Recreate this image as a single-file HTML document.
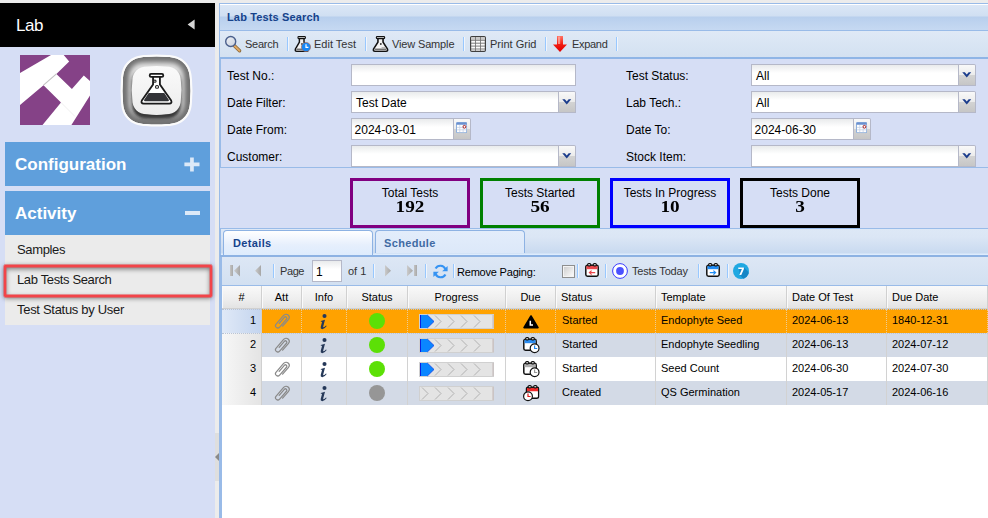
<!DOCTYPE html>
<html>
<head>
<meta charset="utf-8">
<title>Lab Tests Search</title>
<style>
*{box-sizing:border-box;margin:0;padding:0}
html,body{width:988px;height:518px;overflow:hidden}
body{position:relative;background:#ececec;font-family:"Liberation Sans",sans-serif;font-size:12px;color:#000}
.abs{position:absolute}
svg{position:absolute;overflow:visible}
.t{position:absolute;white-space:nowrap;line-height:1}
/* ---------- sidebar ---------- */
#side{position:absolute;left:0;top:3px;width:215px;height:515px;background:#d6def5}
#sidehead{position:absolute;left:0;top:0;width:215px;height:44px;background:#000}
.acc{position:absolute;left:5px;width:205px;height:44px;background:#5f9fdc}
.acc .t{left:10px;color:#fff;font-weight:bold;font-size:17px}
#menu{position:absolute;left:5px;top:232px;width:205px;height:90px;background:#ebebeb}
#menu .t{left:12px;font-size:13px;color:#1a1a1a}
#sel{position:absolute;left:4px;top:261.5px;width:208px;height:32px;border:2px solid #f24449;border-radius:1px;box-shadow:0 0 0 .4px #f24449,inset 0 0 0 .4px #f24449,0 1px 5px rgba(0,0,0,.55),inset 0 2px 5px rgba(0,0,0,.5)}
/* ---------- main ---------- */
#main{position:absolute;left:219px;top:3px;width:769px;height:515px;background:#d6def5;border-left:1px solid #99bbe8;border-top:1px solid #99bbe8}
#phead{position:absolute;left:0;top:0;width:768px;height:26px;border-top:1px solid #fff;background:linear-gradient(#dbe7f6 0,#d0dff2 11px,#b8cfed 12px,#c6d9f2 25px)}
#phead .t{left:7px;top:6.5px;font-weight:bold;font-size:11px;color:#15428b;letter-spacing:.15px}
#tbar{position:absolute;left:0;top:26px;width:768px;height:29px;border-top:1px solid #99bbe8;border-bottom:2px solid #8fb5e6;background:linear-gradient(#dfe9f6,#d3e1f1)}
#tbar .t{top:8px;font-size:11px;color:#333}
.sep{position:absolute;width:2px;height:14px;border-left:1px solid #98c8ff;border-right:1px solid #f0f5fc}
#form{position:absolute;left:0;top:55px;width:768px;height:109px;border-left:1px solid #99bbe8;border-bottom:1px solid #99bbe8;overflow:hidden}
.lbl{position:absolute;font-size:12px;line-height:1;white-space:nowrap}
.inp{position:absolute;height:22px;border:1px solid #b5b8c8;background:linear-gradient(#e9ebec 0,#fff 8px);font-size:12px;line-height:20px;padding-left:4px;padding-top:1px;white-space:nowrap}
.trg{position:absolute;width:17px;height:22px;border:1px solid #b5b8c8;border-left:0;border-radius:0 2px 0 0;background:linear-gradient(#f9f9f9 0,#ececec 48%,#d3d3d3 52%,#c6c6c6 100%)}
.stat{position:absolute;top:174px;width:120px;height:50px;border:3px solid #000;text-align:center}
.stat .a{position:absolute;left:0;right:0;top:6px;font-size:12px;line-height:1}
.stat .b{position:absolute;left:0;right:0;top:18px;font-family:"Liberation Serif",serif;font-weight:bold;font-size:16px;line-height:1;transform:scaleX(1.2)}
/* tabs */
#tabs{position:absolute;left:0;top:224px;width:768px;height:29px;border-top:1px solid #99bbe8;border-left:1px solid #99bbe8;background:linear-gradient(#dde8f6 0,#dbe6f5 8px,#c9daf0 24px,#deecfd 25px)}
.tab{position:absolute;top:1px;height:23px;border:1px solid #8db2e3;border-bottom:0;border-radius:4px 4px 0 0}
.tab .t{top:7px;left:9px;font-weight:bold;font-size:11px;letter-spacing:.35px}
#tabline{position:absolute;left:0;top:251px;width:768px;height:2px;background:#8db2e3}
/* paging toolbar */
#pbar{position:absolute;left:0;top:253px;width:768px;height:28px;border-left:2px solid #99bbe8;background:linear-gradient(#dde7f5,#d2e0f1)}
#pbar .t{font-size:11px;top:9px;color:#333}
/* grid */
#grid{position:absolute;left:0;top:281px;width:768px;height:234px;border-left:2px solid #99bbe8;border-top:1px solid #99bbe8;background:#fff}
#ghead{position:absolute;left:0;top:0;width:766px;height:23px;background:linear-gradient(#f9f9f9 0,#eeeeee 60%,#e3e3e3 100%);border-bottom:1px solid #d0d0d0}
.hc{position:absolute;top:0;height:22px;border-right:1px solid #d0d0d0;border-left:1px solid #fafafa;font-size:11px;line-height:22px;white-space:nowrap}
.row{position:absolute;left:0;width:766px;height:24px}
.c{position:absolute;top:0;height:24px;font-size:11px;line-height:22px;white-space:nowrap;border-right:1px solid #d2d2d2}
.num{position:absolute;left:0;top:0;width:40px;height:24px;background:linear-gradient(90deg,#f7f7f7,#e4e4e4);font-size:11px;line-height:22px;text-align:right;padding-right:5px;border-right:1px solid #d0d0d0}
.info{position:absolute;font-family:"Liberation Serif",serif;font-style:italic;font-weight:bold;font-size:22px;line-height:1;color:#253858;-webkit-text-stroke:.35px #253858}
</style>
</head>
<body>

<svg width="0" height="0">
<defs>
  <linearGradient id="gtri" x1="0" y1="0" x2="1" y2="0"><stop offset="0" stop-color="#cbcbcb"/><stop offset="1" stop-color="#a6a6a6"/></linearGradient>
  <linearGradient id="gred" x1="0" y1="0" x2="0" y2="1"><stop offset="0" stop-color="#ff7466"/><stop offset=".5" stop-color="#f21d12"/><stop offset="1" stop-color="#e00000"/></linearGradient>
  <linearGradient id="gchk" x1="0" y1="0" x2="1" y2="1"><stop offset="0" stop-color="#cfcfcf"/><stop offset="1" stop-color="#fbfbfb"/></linearGradient>
  <linearGradient id="glens" x1="0" y1="0" x2="1" y2="1"><stop offset="0" stop-color="#eef1f6"/><stop offset="1" stop-color="#c9d0dc"/></linearGradient>
  <radialGradient id="gbez" cx=".5" cy=".5" r=".5"><stop offset=".60" stop-color="#d9d9d9"/><stop offset=".80" stop-color="#a9a9a9"/><stop offset=".95" stop-color="#767676"/><stop offset="1" stop-color="#6e6e6e"/></radialGradient>
  <linearGradient id="gbtn" x1="0" y1="0" x2="0" y2="1"><stop offset="0" stop-color="#fafafa"/><stop offset="1" stop-color="#ececec"/></linearGradient>
  <filter id="blur1" x="-30%" y="-30%" width="160%" height="160%"><feGaussianBlur stdDeviation="1.8"/></filter><filter id="blur2" x="-30%" y="-30%" width="160%" height="160%"><feGaussianBlur stdDeviation="2.6"/></filter>
  <symbol id="flask" viewBox="0 0 16 16" preserveAspectRatio="none">
    <path d="M5.6 2 V6.2 L1.4 13.2 Q0.9 15.2 2.8 15.2 H13.2 Q15.1 15.2 14.6 13.2 L10.4 6.2 V2 Z" fill="#f3f3f3" stroke="#111" stroke-width="1.5" stroke-linejoin="round"/>
    <path d="M3.6 11 H12.4 L13.8 13.6 Q13.9 14.4 13 14.4 H3 Q2.1 14.4 2.2 13.6 Z" fill="#b9b9b9"/>
    <path d="M2.6 13.4 H13.4" stroke="#6a6a6a" stroke-width="1"/>
    <path d="M3.8 11.6 H9" stroke="#fff" stroke-width="1"/>
    <rect x="4.1" y="0.6" width="7.8" height="2" rx=".8" fill="#eee" stroke="#111" stroke-width="1.1"/>
    <circle cx="8.3" cy="8" r=".9" fill="#333"/>
  </symbol>
  <symbol id="clip" viewBox="-9 -9 18 18">
    <g transform="rotate(41) scale(1.0,1.04)"><path d="M3.3 3.5 V-5.4 A3.3 3.3 0 0 0 -3.3 -5.4 V6.2 A2.45 2.45 0 0 0 1.6 6.2 V-4.4 A1.5 1.5 0 0 0 -1.4 -4.4 V3.6" fill="none" stroke="#898989" stroke-width="1.3" stroke-linecap="round"/></g>
  </symbol>
  <symbol id="dd" viewBox="0 0 9 6"><path d="M0 .3 H2.6 L4.5 2.5 L6.4 .3 H9 L4.5 5.6 Z" fill="#1c3d8c"/></symbol>
  <symbol id="cal" viewBox="0 0 11 11">
    <rect x=".5" y=".5" width="10" height="10" rx="1" fill="#fff" stroke="#8fb0dc"/>
    <rect x=".5" y=".5" width="10" height="2.2" fill="#6a90d0"/>
    <path d="M3.7 3 V10 M7 3 V10 M1 5.3 H10 M1 7.7 H10" stroke="#c5d2e6" stroke-width=".8"/>
    <circle cx="8.3" cy="4.7" r="1.35" fill="#fff" stroke="#a81818" stroke-width=".95"/>
  </symbol>
  <!-- calendar w/ rings, 14x14. fill of band via currentColor -->
  <symbol id="cal14" viewBox="0 0 14 14">
    <rect x=".8" y="2.2" width="12.4" height="11" rx="1.7" fill="#fff" stroke="#111" stroke-width="1.5"/>
    <path d="M1.5 2.9 H12.5 V6.2 H1.5 Z" fill="currentColor"/>
    <rect x="2.6" y=".6" width="3.2" height="2.3" rx="1.1" fill="#fff" stroke="#111" stroke-width="1.1"/>
    <rect x="8.2" y=".6" width="3.2" height="2.3" rx="1.1" fill="#fff" stroke="#111" stroke-width="1.1"/>
  </symbol>
  <symbol id="prog0" viewBox="0 0 75 15">
    <rect x=".5" y=".5" width="74" height="14" fill="#e4e4e4" stroke="#d0d0d0"/>
    <path d="M74 1 V14" stroke="#c4b8b8" stroke-width="1"/>
    <path d="M3 1.5 L9 7.5 L3 13.5 M16 1.5 L22 7.5 L16 13.5 M29 1.5 L35 7.5 L29 13.5 M42 1.5 L48 7.5 L42 13.5 M55 1.5 L61 7.5 L55 13.5" fill="none" stroke="#b2b2b2" stroke-width="1"/>
  </symbol>
  <symbol id="prog1" viewBox="0 0 75 15">
    <rect x=".5" y=".5" width="74" height="14" fill="#e4e4e4" stroke="#d0d0d0"/>
    <path d="M74 1 V14" stroke="#c4b8b8" stroke-width="1"/>
    <path d="M16 1.5 L22 7.5 L16 13.5 M29 1.5 L35 7.5 L29 13.5 M42 1.5 L48 7.5 L42 13.5 M55 1.5 L61 7.5 L55 13.5" fill="none" stroke="#b2b2b2" stroke-width="1"/>
    <path d="M1.2 1 H8.3 L15 7.5 L8.3 14 H1.2 Z" fill="#0a86ff"/>
    <path d="M1.5 1 V14" stroke="#0a1ee0" stroke-width="1"/>
    <path d="M8.3 1 L15 7.5 L8.3 14" fill="none" stroke="#1040e8" stroke-width=".8"/>
  </symbol>
</defs>
</svg>

<!-- ================= SIDEBAR ================= -->
<div id="side">
  <div id="sidehead">
    <div class="t" style="left:16px;top:13.7px;font-size:17px;color:#fff;letter-spacing:-.5px">Lab</div>
    <svg style="left:186.8px;top:15.9px" width="8" height="11" viewBox="0 0 8 11"><path d="M7.6 .4 L.6 5.5 L7.6 10.6 Z" fill="#d6d6d6"/></svg>
  </div>
  <svg style="left:20px;top:52px" width="70" height="70" viewBox="0 0 70 70">
    <rect width="70" height="70" fill="#854287"/>
    <path d="M0 18.1 L31 0 L43.7 0 L49.2 6.5 L36.4 18.9 L51.9 33.9 L63.8 20.4 L70 25.9 L70 40.6 L51.4 70 L22.5 70 L41 47.5 L23.5 30.2 L0 49.9 Z" fill="#fff"/>
    <path d="M36.4 18.9 L23.5 30.2" stroke="#c2c2c2" stroke-width="1.1"/><path d="M41 47.5 L55 61.5" stroke="#e4e4e4" stroke-width=".6"/>
  </svg>
  
  <svg style="left:121.2px;top:51.8px" width="71" height="71" viewBox="0 0 71 71">
    <defs><clipPath id="cpo"><path d="M25 2 Q35.5 1.0 46 2 C60.26 2 69 10.74 69 25 Q70.0 35.5 69 46 C69 60.26 60.26 69 46 69 Q35.5 70.0 25 69 C10.74 69 2 60.26 2 46 Q1.0 35.5 2 25 C2 10.74 10.74 2 25 2 Z"/></clipPath></defs>
    <path d="M25 0 Q35.5 -1.0 46 0 C61.5 0 71 9.5 71 25 Q72.0 35.5 71 46 C71 61.5 61.5 71 46 71 Q35.5 72.0 25 71 C9.5 71 0 61.5 0 46 Q-1.0 35.5 0 25 C0 9.5 9.5 0 25 0 Z" fill="#fbfbfb"/>
    <g clip-path="url(#cpo)">
      <path d="M25 2 Q35.5 1.0 46 2 C60.26 2 69 10.74 69 25 Q70.0 35.5 69 46 C69 60.26 60.26 69 46 69 Q35.5 70.0 25 69 C10.74 69 2 60.26 2 46 Q1.0 35.5 2 25 C2 10.74 10.74 2 25 2 Z" fill="#707070"/>
      <path d="M23 7.5 Q35.5 6.9 48 7.5 C57.3 7.5 63 13.2 63 22.5 Q63.6 35.0 63 47.5 C63 56.8 57.3 62.5 48 62.5 Q35.5 63.1 23 62.5 C13.7 62.5 8 56.8 8 47.5 Q7.4 35.0 8 22.5 C8 13.2 13.7 7.5 23 7.5 Z" fill="#e2e2e2" filter="url(#blur2)"/>
      <path d="M25 14.5 Q35.5 13.9 46 14.5 C54.68 14.5 60 19.82 60 28.5 Q60.6 39.0 60 49.5 C60 58.18 54.68 63.5 46 63.5 Q35.5 64.1 25 63.5 C16.32 63.5 11 58.18 11 49.5 Q10.4 39.0 11 28.5 C11 19.82 16.32 14.5 25 14.5 Z" fill="#1c1c1c" opacity=".85" filter="url(#blur1)"/>
    </g>
    <path d="M26.3 11.5 Q35.6 10.3 44.900000000000006 11.5 C54.2 11.5 59.900000000000006 17.2 59.900000000000006 26.5 Q61.10000000000001 35.4 59.900000000000006 44.3 C59.900000000000006 53.599999999999994 54.2 59.3 44.900000000000006 59.3 Q35.6 60.5 26.3 59.3 C17.0 59.3 11.3 53.599999999999994 11.3 44.3 Q10.100000000000001 35.4 11.3 26.5 C11.3 17.2 17.0 11.5 26.3 11.5 Z" fill="url(#gbtn)"/>
    <g transform="translate(18.9,18.1) scale(1.07,1.03)">
      <path d="M12.3 3.6 V11 L1.8 26.6 Q0.6 29.4 3.6 29.6 H27.4 Q30.4 29.4 29.2 26.6 L18.7 11 V3.6" fill="#fff" stroke="#1a1a1a" stroke-width="1.7" stroke-linejoin="round"/>
      <rect x="9.2" y=".8" width="12.6" height="2.9" rx="1.2" fill="#fff" stroke="#1a1a1a" stroke-width="1.7"/>
      <path d="M8.2 19.2 H22.8 L27 25.8 Q27.6 27.4 26 27.4 H5 Q3.4 27.4 4 25.8 Z" fill="#333438"/>
      <circle cx="14" cy="7.8" r="1.1" fill="#fff" stroke="#1a1a1a" stroke-width="1"/>
      <circle cx="16" cy="13.4" r="1.4" fill="#fff" stroke="#1a1a1a" stroke-width="1"/>
    </g>
  </svg>

  <div class="acc" style="top:139px"><div class="t" style="top:14px">Configuration</div>
    <svg style="left:179px;top:14.6px" width="16" height="15" viewBox="0 0 16 15"><path d="M6.1 0.4h3.7v5.2h5.7v3.7H9.8v5.2H6.1V9.3H0.4V5.6h5.7z" fill="#dce9f8"/></svg>
  </div>
  <div class="acc" style="top:188px"><div class="t" style="top:14px">Activity</div>
    <div class="abs" style="left:180px;top:20.3px;width:15px;height:3.4px;background:#dce9f8"></div>
  </div>
  <div id="menu">
    <div class="t" style="top:8.3px;letter-spacing:-.35px">Samples</div>
    <div class="t" style="top:38.3px;letter-spacing:-.36px">Lab Tests Search</div>
    <div class="t" style="top:68.3px;letter-spacing:-.3px">Test Status by User</div>
  </div>
  <div id="sel"></div>
</div>
<div class="abs" style="left:215px;top:433px;width:4px;height:48px;background:#dedede"></div>
<svg style="left:215px;top:453px" width="4" height="8" viewBox="0 0 4 8"><path d="M4 0 L0 4 L4 8Z" fill="#8a8a8a"/></svg>

<!-- ================= MAIN ================= -->
<div id="main">
  <div id="phead"><div class="t">Lab Tests Search</div></div>
  <div id="tbar"><svg style="left:4px;top:4px" width="18" height="18" viewBox="0 0 18 18"><path d="M9.6 10 L15.6 15.8" stroke="#8a6a3a" stroke-width="3.4" stroke-linecap="round"/><path d="M10 10.4 L15.4 15.6" stroke="#e2a862" stroke-width="2" stroke-linecap="round"/><circle cx="6.7" cy="6.5" r="5" fill="url(#glens)" stroke="#4a5f8c" stroke-width="1.4"/></svg><div class="t" style="left:25px;letter-spacing:-.25px">Search</div><div class="sep" style="left:67px;top:6px"></div><svg style="left:73.6px;top:5px;" width="15.4" height="16"><use href="#flask" width="15.4" height="16"/></svg><svg style="left:81px;top:11px" width="10" height="10" viewBox="0 0 10 10"><circle cx="5" cy="5" r="4.6" fill="#1787f5" stroke="#b36a4a" stroke-width=".6"/><path d="M5 2.3 V5.3 H7.4" fill="none" stroke="#fff" stroke-width="1.2"/></svg><div class="t" style="left:94px">Edit Test</div><div class="sep" style="left:145px;top:6px"></div><svg style="left:151.5px;top:5px;" width="17" height="16"><use href="#flask" width="17" height="16"/></svg><div class="t" style="left:172px;letter-spacing:-.15px">View Sample</div><div class="sep" style="left:243px;top:6px"></div><svg style="left:250px;top:5px" width="16" height="16" viewBox="0 0 16 16"><rect x=".6" y=".6" width="14.8" height="14.8" rx="1.2" fill="#fbfbfb" stroke="#3f3f3f" stroke-width="1.2"/><rect x="1.2" y="1.2" width="13.6" height="2.6" fill="#c9c9c9"/><path d="M1 4.3 H15 M1 7.2 H15 M1 10.1 H15 M1 13 H15" stroke="#666" stroke-width=".85"/><path d="M5.5 1 V15 M10.5 1 V15" stroke="#707070" stroke-width=".85"/></svg><div class="t" style="left:270px">Print Grid</div><div class="sep" style="left:325px;top:6px"></div><svg style="left:333px;top:5px" width="14" height="16" viewBox="0 0 14 16"><path d="M4 0 H10 V8.4 H14 L7 16 L0 8.4 H4 Z" fill="url(#gred)"/><path d="M5 .6 H7.2 V8 H5 Z" fill="#ffb0a6" opacity=".7"/></svg><div class="t" style="left:352px;letter-spacing:-.3px">Expand</div><div class="sep" style="left:396px;top:6px"></div></div>
  <div id="form"><div class="abs" style="left:1px;top:-1px">
    <div class="lbl" style="left:5px;top:12px">Test No.:</div>
    <div class="lbl" style="left:5px;top:39px">Date Filter:</div>
    <div class="lbl" style="left:5px;top:66px">Date From:</div>
    <div class="lbl" style="left:5px;top:93px">Customer:</div>
    <div class="inp" style="left:129px;top:6px;width:225px"></div>
    <div class="inp" style="left:129px;top:33px;width:208px">Test Date</div><div class="trg" style="left:337px;top:33px"><svg style="left:2.9px;top:6.6px;" width="9.5" height="6"><use href="#dd" width="9.5" height="6"/></svg></div>
    <div class="inp" style="left:129px;top:60px;width:103px;padding-left:2.6px">2024-03-01</div><div class="trg" style="left:232px;top:60px"><svg style="left:2.1px;top:3.2px;" width="11.2" height="11.2"><use href="#cal" width="11.2" height="11.2"/></svg></div>
    <div class="inp" style="left:129px;top:87px;width:208px"></div><div class="trg" style="left:337px;top:87px"><svg style="left:2.9px;top:6.6px;" width="9.5" height="6"><use href="#dd" width="9.5" height="6"/></svg></div>
    <div class="lbl" style="left:404px;top:12px">Test Status:</div>
    <div class="lbl" style="left:404px;top:39px">Lab Tech.:</div>
    <div class="lbl" style="left:404px;top:66px">Date To:</div>
    <div class="lbl" style="left:404px;top:93px">Stock Item:</div>
    <div class="inp" style="left:529px;top:6px;width:208px">All</div><div class="trg" style="left:737px;top:6px"><svg style="left:2.9px;top:6.6px;" width="9.5" height="6"><use href="#dd" width="9.5" height="6"/></svg></div>
    <div class="inp" style="left:529px;top:33px;width:208px">All</div><div class="trg" style="left:737px;top:33px"><svg style="left:2.9px;top:6.6px;" width="9.5" height="6"><use href="#dd" width="9.5" height="6"/></svg></div>
    <div class="inp" style="left:529px;top:60px;width:103px;padding-left:2.6px">2024-06-30</div><div class="trg" style="left:632px;top:60px"><svg style="left:2.1px;top:3.2px;" width="11.2" height="11.2"><use href="#cal" width="11.2" height="11.2"/></svg></div>
    <div class="inp" style="left:529px;top:87px;width:208px"></div><div class="trg" style="left:737px;top:87px"><svg style="left:2.9px;top:6.6px;" width="9.5" height="6"><use href="#dd" width="9.5" height="6"/></svg></div>
</div></div>
  <div class="stat" style="left:130px;border-color:#800080"><div class="a">Total Tests</div><div class="b">192</div></div>
  <div class="stat" style="left:260px;border-color:#008000"><div class="a">Tests Started</div><div class="b">56</div></div>
  <div class="stat" style="left:390px;border-color:#0000ff"><div class="a">Tests In Progress</div><div class="b">10</div></div>
  <div class="stat" style="left:520px;border-color:#000"><div class="a">Tests Done</div><div class="b">3</div></div>
  <div id="tabs">
    <div class="tab" style="left:2px;width:150px;height:25px;background:linear-gradient(#fff 0,#f6f9fe 5px,#e6effc 14px,#deecfd 100%)"><div class="t" style="color:#15428b">Details</div></div>
    <div class="tab" style="left:154px;width:150px;background:linear-gradient(#e3edfb 0,#dce8f9 100%)"><div class="t" style="color:#416aa3;left:8px">Schedule</div></div>
  </div>
  <div id="tabline"></div>
  <div id="pbar"><div class="abs" style="left:8px;top:7.8px;width:3px;height:11.5px;background:linear-gradient(90deg,#c4c4c4,#a8a8a8)"></div><svg style="left:12px;top:7.8px" width="6" height="11.5" viewBox="0 0 6 11.5"><path d="M6 0 L0 5.75 L6 11.5 Z" fill="url(#gtri)"/></svg><svg style="left:33px;top:7.8px" width="6" height="11.5" viewBox="0 0 6 11.5"><path d="M6 0 L0 5.75 L6 11.5 Z" fill="url(#gtri)"/></svg><div class="sep" style="left:50.5px;top:7px"></div><div class="t" style="left:58px;letter-spacing:-.4px">Page</div><div class="inp" style="left:90px;top:3px;width:30px;height:22px;padding-left:3px">1</div><div class="t" style="left:126px">of 1</div><div class="sep" style="left:151px;top:7px"></div><svg style="left:163px;top:7.8px" width="6" height="11.5" viewBox="0 0 6 11.5"><path d="M0 0 L6 5.75 L0 11.5 Z" fill="url(#gtri)"/></svg><svg style="left:185px;top:7.8px" width="6" height="11.5" viewBox="0 0 6 11.5"><path d="M0 0 L6 5.75 L0 11.5 Z" fill="url(#gtri)"/></svg><div class="abs" style="left:192px;top:7.8px;width:3px;height:11.5px;background:linear-gradient(90deg,#c4c4c4,#a8a8a8)"></div><div class="sep" style="left:203px;top:7px"></div><svg style="left:210.5px;top:7px" width="15" height="15" viewBox="0 0 15 15"><path d="M12.4 5.2 A5.4 5.4 0 0 0 2.6 4.6" fill="none" stroke="#3593f3" stroke-width="2.2"/><path d="M14.6 2 V7.2 H9.2 Z" fill="#3593f3"/><path d="M2.6 9.8 A5.4 5.4 0 0 0 12.4 10.4" fill="none" stroke="#3593f3" stroke-width="2.2"/><path d="M.4 13 V7.8 H5.8 Z" fill="#3593f3"/></svg><div class="sep" style="left:231px;top:7px"></div><div class="t" style="left:235px;top:10px;color:#000;letter-spacing:-.2px">Remove Paging:</div><div class="abs" style="left:340px;top:8px;width:13px;height:13px;border:1px solid #8e8f8f;background:#f4f4f4"><div class="abs" style="left:1px;top:1px;width:9px;height:9px;background:linear-gradient(135deg,#d0d0d0,#fafafa)"></div></div><div class="sep" style="left:355px;top:7px"></div><svg style="left:363px;top:6px;color:#ea474d" width="14" height="14" viewBox="0 0 14 14"><use href="#cal14" width="14" height="14"/><path d="M10.2 9.6 H4.6 M6.6 7.6 L4.4 9.6 L6.6 11.6" fill="none" stroke="#ea474d" stroke-width="1.2"/></svg><div class="sep" style="left:383px;top:7px"></div><svg style="left:390px;top:6px" width="16" height="16" viewBox="0 0 16 16"><circle cx="8" cy="8" r="7.4" fill="#fff" stroke="#3a3cff" stroke-width="1"/><circle cx="8" cy="8" r="3.9" fill="#4b52ff"/></svg><div class="t" style="left:410px;letter-spacing:-.2px">Tests Today</div><div class="sep" style="left:476px;top:7px"></div><svg style="left:484px;top:6px;color:#1f8cf5" width="14" height="14" viewBox="0 0 14 14"><use href="#cal14" width="14" height="14"/><path d="M3.8 9.6 H9.4 M7.4 7.6 L9.6 9.6 L7.4 11.6" fill="none" stroke="#1f8cf5" stroke-width="1.2"/></svg><div class="sep" style="left:504.5px;top:7px"></div><svg style="left:511px;top:6px" width="16" height="16" viewBox="0 0 16 16"><defs><clipPath id="c7"><circle cx="8" cy="8" r="8"/></clipPath></defs><circle cx="8" cy="8" r="8" fill="#1fa8e2"/><path d="M6 4.5 L11 4.5 L20 13.5 L14 20 L6.8 12 Z" fill="#1686c6" clip-path="url(#c7)"/><path d="M5.3 4.4 H10.9 V5.9 L8.3 12 H6.3 L8.9 6.1 H5.3 Z" fill="#fff"/></svg></div>
  <div id="grid">
    <div id="ghead"><div class="hc" style="left:0px;width:40px;text-align:center;padding-right:1px">#</div><div class="hc" style="left:40px;width:40px;text-align:center;padding-right:1px">Att</div><div class="hc" style="left:80px;width:45px;text-align:center;padding-right:1px">Info</div><div class="hc" style="left:125px;width:61px;text-align:center;padding-right:1px">Status</div><div class="hc" style="left:186px;width:98px;text-align:center;padding-right:1px">Progress</div><div class="hc" style="left:284px;width:50px;text-align:center;padding-right:1px">Due</div><div class="hc" style="left:334px;width:100px;padding-left:4px">Status</div><div class="hc" style="left:434px;width:131px;padding-left:4px">Template</div><div class="hc" style="left:565px;width:100px;padding-left:4px">Date Of Test</div><div class="hc" style="left:665px;width:101px;padding-left:4px">Due Date</div></div>
    <div class="row" style="top:23px;background:#ffa200;"><div class="num" style="background:linear-gradient(90deg,#e0e9f7,#c3d4ee);">1</div><div class="c" style="left:40px;width:40px;border-right:1px dotted rgba(225,232,245,.6);"><svg style="left:11.5px;top:3.5px;" width="17" height="17"><use href="#clip" width="17" height="17"/></svg></div><div class="c" style="left:80px;width:45px;border-right:1px dotted rgba(225,232,245,.6);"><svg style="left:18.2px;top:4.5px" width="7" height="15.4" viewBox="0 0 7 15.4"><circle cx="4.5" cy="2.05" r="2.05" fill="#253858"/><path d="M0.9 6.9 L5.0 5.7 L3.2 12.5 Q3 13.4 3.7 13.3 Q4.6 13 6.0 11.5 L6.7 12.1 Q4.6 15.1 2.3 15.2 Q0.2 15.2 0.7 13.1 L2.1 7.8 L0.8 7.7 Z" fill="#253858"/></svg></div><div class="c" style="left:125px;width:61px;border-right:1px dotted rgba(225,232,245,.6);"><div class="abs" style="left:22px;top:4px;width:16px;height:16px;border-radius:8px;background:#5ce006"></div></div><div class="c" style="left:186px;width:98px;border-right:1px dotted rgba(225,232,245,.6);"><svg style="left:11px;top:4.5px;" width="75" height="15"><use href="#prog1" width="75" height="15"/></svg></div><div class="c" style="left:284px;width:50px;border-right:1px dotted rgba(225,232,245,.6);"><svg style="left:17px;top:5.5px" width="16" height="14" viewBox="0 0 16 14"><path d="M8 1 L15 12.6 H1 Z" fill="#000" stroke="#000" stroke-width="1.6" stroke-linejoin="round"/><path d="M7.3 5.8 V10.1 H10" fill="none" stroke="#fff" stroke-width="1.5"/></svg></div><div class="c" style="left:334px;width:100px;padding-left:6px;border-right:1px dotted rgba(225,232,245,.6);">Started</div><div class="c" style="left:434px;width:131px;padding-left:5px;border-right:1px dotted rgba(225,232,245,.6);">Endophyte Seed</div><div class="c" style="left:565px;width:100px;padding-left:5px;border-right:1px dotted rgba(225,232,245,.6);">2024-06-13</div><div class="c" style="left:665px;width:101px;padding-left:5px;border-right:1px dotted rgba(225,232,245,.6);">1840-12-31</div><div class="abs" style="left:0;top:0;width:766px;height:25px;border-top:1px dotted #b9c4d6;border-bottom:1px dotted #b9c4d6;z-index:3"></div></div>
<div class="row" style="top:47px;background:#d3dae6;"><div class="num" style="">2</div><div class="c" style="left:40px;width:40px;"><svg style="left:11.5px;top:3.5px;" width="17" height="17"><use href="#clip" width="17" height="17"/></svg></div><div class="c" style="left:80px;width:45px;"><svg style="left:18.2px;top:4.5px" width="7" height="15.4" viewBox="0 0 7 15.4"><circle cx="4.5" cy="2.05" r="2.05" fill="#253858"/><path d="M0.9 6.9 L5.0 5.7 L3.2 12.5 Q3 13.4 3.7 13.3 Q4.6 13 6.0 11.5 L6.7 12.1 Q4.6 15.1 2.3 15.2 Q0.2 15.2 0.7 13.1 L2.1 7.8 L0.8 7.7 Z" fill="#253858"/></svg></div><div class="c" style="left:125px;width:61px;"><div class="abs" style="left:22px;top:4px;width:16px;height:16px;border-radius:8px;background:#5ce006"></div></div><div class="c" style="left:186px;width:98px;"><svg style="left:11px;top:4.5px;" width="75" height="15"><use href="#prog1" width="75" height="15"/></svg></div><div class="c" style="left:284px;width:50px;"><svg style="left:17px;top:4px;color:#2b8cf0" width="20" height="17" viewBox="0 0 20 17"><svg x="0" y="0" width="14" height="14"><use href="#cal14" width="14" height="14"/></svg><circle cx="11.6" cy="11.3" r="4.4" fill="#fff" stroke="#111" stroke-width="1.2"/><path d="M11.6 8.5 V11.5 H14.2" fill="none" stroke="#1f86f0" stroke-width="1.2"/></svg></div><div class="c" style="left:334px;width:100px;padding-left:6px;">Started</div><div class="c" style="left:434px;width:131px;padding-left:5px;">Endophyte Seedling</div><div class="c" style="left:565px;width:100px;padding-left:5px;">2024-06-13</div><div class="c" style="left:665px;width:101px;padding-left:5px;">2024-07-12</div></div>
<div class="row" style="top:71px;background:#ffffff;"><div class="num" style="">3</div><div class="c" style="left:40px;width:40px;"><svg style="left:11.5px;top:3.5px;" width="17" height="17"><use href="#clip" width="17" height="17"/></svg></div><div class="c" style="left:80px;width:45px;"><svg style="left:18.2px;top:4.5px" width="7" height="15.4" viewBox="0 0 7 15.4"><circle cx="4.5" cy="2.05" r="2.05" fill="#253858"/><path d="M0.9 6.9 L5.0 5.7 L3.2 12.5 Q3 13.4 3.7 13.3 Q4.6 13 6.0 11.5 L6.7 12.1 Q4.6 15.1 2.3 15.2 Q0.2 15.2 0.7 13.1 L2.1 7.8 L0.8 7.7 Z" fill="#253858"/></svg></div><div class="c" style="left:125px;width:61px;"><div class="abs" style="left:22px;top:4px;width:16px;height:16px;border-radius:8px;background:#5ce006"></div></div><div class="c" style="left:186px;width:98px;"><svg style="left:11px;top:4.5px;" width="75" height="15"><use href="#prog1" width="75" height="15"/></svg></div><div class="c" style="left:284px;width:50px;"><svg style="left:17px;top:4px;color:#aeaeae" width="20" height="17" viewBox="0 0 20 17"><svg x="0" y="0" width="14" height="14"><use href="#cal14" width="14" height="14"/></svg><circle cx="11.6" cy="11.3" r="4.4" fill="#fff" stroke="#111" stroke-width="1.2"/><path d="M11.6 8.5 V11.5 H14.2" fill="none" stroke="#9a9a9a" stroke-width="1.2"/></svg></div><div class="c" style="left:334px;width:100px;padding-left:6px;">Started</div><div class="c" style="left:434px;width:131px;padding-left:5px;">Seed Count</div><div class="c" style="left:565px;width:100px;padding-left:5px;">2024-06-30</div><div class="c" style="left:665px;width:101px;padding-left:5px;">2024-07-30</div></div>
<div class="row" style="top:95px;background:#d3dae6;"><div class="num" style="">4</div><div class="c" style="left:40px;width:40px;"><svg style="left:11.5px;top:3.5px;" width="17" height="17"><use href="#clip" width="17" height="17"/></svg></div><div class="c" style="left:80px;width:45px;"><svg style="left:18.2px;top:4.5px" width="7" height="15.4" viewBox="0 0 7 15.4"><circle cx="4.5" cy="2.05" r="2.05" fill="#253858"/><path d="M0.9 6.9 L5.0 5.7 L3.2 12.5 Q3 13.4 3.7 13.3 Q4.6 13 6.0 11.5 L6.7 12.1 Q4.6 15.1 2.3 15.2 Q0.2 15.2 0.7 13.1 L2.1 7.8 L0.8 7.7 Z" fill="#253858"/></svg></div><div class="c" style="left:125px;width:61px;"><div class="abs" style="left:22px;top:4px;width:16px;height:16px;border-radius:8px;background:#969696"></div></div><div class="c" style="left:186px;width:98px;"><svg style="left:11px;top:4.5px;" width="75" height="15"><use href="#prog0" width="75" height="15"/></svg></div><div class="c" style="left:284px;width:50px;"><svg style="left:14px;top:4px;color:#ee2a2a" width="20" height="17" viewBox="0 0 20 17"><svg x="5.5" y="0" width="14" height="14"><use href="#cal14" width="14" height="14"/></svg><circle cx="8" cy="11.3" r="4.4" fill="#fff" stroke="#111" stroke-width="1.2"/><path d="M8 8.5 V11.5 H10.6" fill="none" stroke="#e01818" stroke-width="1.2"/></svg></div><div class="c" style="left:334px;width:100px;padding-left:6px;">Created</div><div class="c" style="left:434px;width:131px;padding-left:5px;">QS Germination</div><div class="c" style="left:565px;width:100px;padding-left:5px;">2024-05-17</div><div class="c" style="left:665px;width:101px;padding-left:5px;">2024-06-16</div></div>

  </div>
</div>
</body>
</html>
